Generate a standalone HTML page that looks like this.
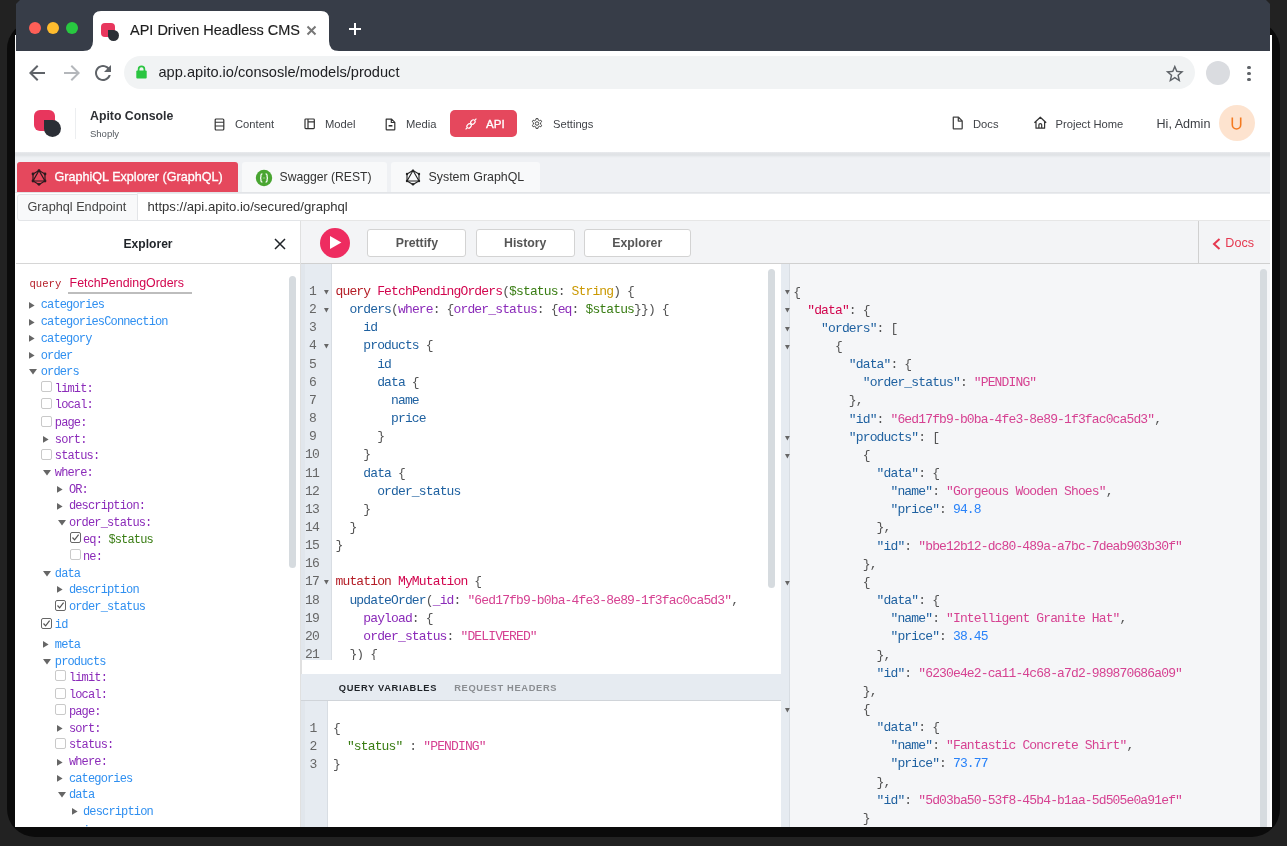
<!DOCTYPE html><html><head><meta charset="utf-8"><style>
html,body{margin:0;padding:0;}
body{width:1287px;height:846px;overflow:hidden;background:#222222;position:relative;font-family:"Liberation Sans",sans-serif;}
</style></head><body>
<div style="position:absolute;left:6.5px;top:21px;width:1273px;height:816px;background:#0b0b0b;border-radius:28px;"></div>
<div style="position:absolute;left:0;top:0;width:1287px;height:827px;overflow:hidden;will-change:transform;">
<div style="position:absolute;left:15px;top:35px;width:1257px;height:792px;background:#ffffff;"></div>
<div style="position:absolute;left:16px;top:0px;width:1254px;height:51px;background:#373d48;clip-path:polygon(4px 0,1250px 0,1254px 4px,1254px 51px,0 51px,0 4px);"></div>
<svg style="position:absolute;left:83px;top:10px" width="256" height="41" viewBox="0 0 256 41"><path d="M0 41 Q10 41 10 31 L10 9 Q10 1 18 1 L238 1 Q246 1 246 9 L246 31 Q246 41 256 41 Z" fill="#ffffff"/></svg>
<div style="position:absolute;left:28.5px;top:22px;width:12px;height:12px;background:#fe5f57;border-radius:50%;"></div>
<div style="position:absolute;left:47px;top:22px;width:12px;height:12px;background:#febc2e;border-radius:50%;"></div>
<div style="position:absolute;left:65.5px;top:22px;width:12px;height:12px;background:#28c840;border-radius:50%;"></div>
<div style="position:absolute;left:101px;top:23px;width:14px;height:14px;background:#e8365d;border-radius:4px;"></div>
<div style="position:absolute;left:108px;top:30px;width:11px;height:11px;background:#2b2f36;border-radius:0 50% 50% 50%;"></div>
<div style="position:absolute;left:130.00px;top:22.72px;font-family:'Liberation Sans', sans-serif;font-size:14.5px;line-height:14.5px;color:#1e1e1e;font-weight:400;white-space:pre;-webkit-text-stroke:0.15px #1e1e1e;">API Driven Headless CMS</div>
<svg style="position:absolute;left:306px;top:25px" width="11" height="11" viewBox="0 0 11 11"><path d="M1.5 1.5 L9.5 9.5 M9.5 1.5 L1.5 9.5" stroke="#777" stroke-width="2"/></svg>
<svg style="position:absolute;left:348px;top:22px" width="14" height="14" viewBox="0 0 14 14"><path d="M7 1 V13 M1 7 H13" stroke="#ffffff" stroke-width="2"/></svg>
<svg style="position:absolute;left:25.3px;top:60.7px" width="24" height="24" viewBox="0 0 24 24"><path d="M20 11H7.83l5.59-5.59L12 4l-8 8 8 8 1.41-1.41L7.83 13H20v-2z" fill="#5f6368"/></svg>
<svg style="position:absolute;left:59.5px;top:60.7px" width="24" height="24" viewBox="0 0 24 24"><path d="M12 4l-1.41 1.41L16.17 11H4v2h12.17l-5.58 5.59L12 20l8-8z" fill="#b4b7bb"/></svg>
<svg style="position:absolute;left:91px;top:60.5px" width="24" height="24" viewBox="0 0 24 24"><path d="M17.65 6.35C16.2 4.9 14.21 4 12 4c-4.42 0-7.99 3.58-7.99 8s3.57 8 7.99 8c3.73 0 6.84-2.55 7.73-6h-2.08c-.82 2.33-3.04 4-5.65 4-3.31 0-6-2.69-6-6s2.69-6 6-6c1.66 0 3.14.69 4.22 1.78L13 11h7V4l-2.35 2.35z" fill="#5f6368"/></svg>
<div style="position:absolute;left:124px;top:56px;width:1070.5px;height:33px;background:#f1f3f4;border-radius:17px;"></div>
<svg style="position:absolute;left:136px;top:65.3px" width="11" height="14" viewBox="0 0 11 14"><path d="M2.6 6 V4.2 A2.9 2.9 0 0 1 8.4 4.2 V6" stroke="#2ac540" stroke-width="1.7" fill="none"/><rect x="0.3" y="5.6" width="10.4" height="8" rx="1" fill="#2ac540"/></svg>
<div style="position:absolute;left:158.50px;top:64.64px;font-family:'Liberation Sans', sans-serif;font-size:14.6px;line-height:14.6px;color:#202124;font-weight:400;white-space:pre;">app.apito.io/consosle/models/product</div>
<svg style="position:absolute;left:1164.2px;top:62.7px" width="21.6" height="21.6" viewBox="0 0 24 24"><path d="M22 9.24l-7.19-.62L12 2 9.19 8.63 2 9.24l5.46 4.73L5.82 21 12 17.27 18.18 21l-1.63-7.03L22 9.24zM12 15.4l-3.76 2.27 1-4.28-3.32-2.88 4.38-.38L12 6.1l1.71 4.04 4.38.38-3.32 2.88 1 4.28L12 15.4z" fill="#5f6368"/></svg>
<div style="position:absolute;left:1206.2px;top:61.1px;width:24px;height:24px;background:#dadce0;border-radius:50%;"></div>
<div style="position:absolute;left:1247.3px;top:65.7px;width:3.6px;height:3.6px;background:#5f6368;border-radius:50%;"></div>
<div style="position:absolute;left:1247.3px;top:71.7px;width:3.6px;height:3.6px;background:#5f6368;border-radius:50%;"></div>
<div style="position:absolute;left:1247.3px;top:77.8px;width:3.6px;height:3.6px;background:#5f6368;border-radius:50%;"></div>
<div style="position:absolute;left:34px;top:110px;width:21px;height:21px;background:#e8365d;border-radius:6px;"></div>
<div style="position:absolute;left:44px;top:120px;width:17px;height:17px;background:#2b2f36;border-radius:0 50% 50% 50%;"></div>
<div style="position:absolute;left:75px;top:108px;width:1px;height:31px;background:#eceef0;"></div>
<div style="position:absolute;left:90.00px;top:109.59px;font-family:'Liberation Sans', sans-serif;font-size:12.3px;line-height:12.3px;color:#2d2f33;font-weight:700;white-space:pre;">Apito Console</div>
<div style="position:absolute;left:90.00px;top:128.96px;font-family:'Liberation Sans', sans-serif;font-size:9.5px;line-height:9.5px;color:#555a60;font-weight:400;white-space:pre;">Shoply</div>
<svg style="position:absolute;left:214px;top:117.5px" width="11" height="13" viewBox="0 0 11 13"><rect x="1.2" y="1" width="8.6" height="11" rx="1" stroke="#333" stroke-width="1.2" fill="none"/><path d="M1.2 4.3 H9.8 M1.2 8 H9.8" stroke="#333" stroke-width="1.1"/></svg>
<div style="position:absolute;left:235.00px;top:118.52px;font-family:'Liberation Sans', sans-serif;font-size:11.2px;line-height:11.2px;color:#404348;font-weight:400;white-space:pre;">Content</div>
<svg style="position:absolute;left:303.5px;top:118px" width="11" height="12" viewBox="0 0 11 12"><rect x="1" y="1" width="9.3" height="9.6" rx="0.8" stroke="#333" stroke-width="1.2" fill="none"/><path d="M4 1 V10.6 M4 3.8 H10.3" stroke="#333" stroke-width="1.2"/></svg>
<div style="position:absolute;left:325.00px;top:118.52px;font-family:'Liberation Sans', sans-serif;font-size:11.2px;line-height:11.2px;color:#404348;font-weight:400;white-space:pre;">Model</div>
<svg style="position:absolute;left:384.8px;top:117.5px" width="11" height="13" viewBox="0 0 11 13"><path d="M1.2 1.1 H6.6 L9.8 4.3 V11.2 Q9.8 11.9 9.1 11.9 H1.9 Q1.2 11.9 1.2 11.2 Z M6.3 1.1 V4.5 H9.8" stroke="#333" stroke-width="1.2" fill="none" stroke-linejoin="round"/><path d="M3.6 7.8 H7.4" stroke="#222" stroke-width="1.5"/></svg>
<div style="position:absolute;left:406.00px;top:118.52px;font-family:'Liberation Sans', sans-serif;font-size:11.2px;line-height:11.2px;color:#404348;font-weight:400;white-space:pre;">Media</div>
<div style="position:absolute;left:450px;top:110px;width:67px;height:27px;background:#e5485d;border-radius:5px;"></div>
<svg style="position:absolute;left:464.5px;top:118px" width="12" height="12" viewBox="0 0 12 12"><g stroke="#ffffff" stroke-width="1.1" fill="none"><ellipse cx="7.9" cy="4.1" rx="2.5" ry="1.9" transform="rotate(-45 7.9 4.1)"/><ellipse cx="4.1" cy="7.9" rx="2.5" ry="1.9" transform="rotate(-45 4.1 7.9)"/><path d="M9.9 2.1 L11.4 0.6 M2.1 9.9 L0.6 11.4 M5.5 6.5 L6.5 5.5"/></g></svg>
<div style="position:absolute;left:486.00px;top:118.18px;font-family:'Liberation Sans', sans-serif;font-size:11.6px;line-height:11.6px;color:#ffffff;font-weight:400;white-space:pre;-webkit-text-stroke:0.3px #fff;">API</div>
<svg style="position:absolute;left:531px;top:117px" width="12" height="13" viewBox="0 0 24 24"><path d="M12 8.5 A3.5 3.5 0 1 0 12 15.5 A3.5 3.5 0 1 0 12 8.5 Z" stroke="#444" stroke-width="2" fill="none"/><path d="M10.3 2 H13.7 L14.3 4.9 L16.9 6.4 L19.7 5.4 L21.4 8.4 L19.2 10.4 V13.6 L21.4 15.6 L19.7 18.6 L16.9 17.6 L14.3 19.1 L13.7 22 H10.3 L9.7 19.1 L7.1 17.6 L4.3 18.6 L2.6 15.6 L4.8 13.6 V10.4 L2.6 8.4 L4.3 5.4 L7.1 6.4 L9.7 4.9 Z" stroke="#444" stroke-width="2" fill="none" stroke-linejoin="round"/></svg>
<div style="position:absolute;left:553.00px;top:118.52px;font-family:'Liberation Sans', sans-serif;font-size:11.2px;line-height:11.2px;color:#404348;font-weight:400;white-space:pre;">Settings</div>
<svg style="position:absolute;left:952px;top:115.5px" width="12" height="14" viewBox="0 0 12 14"><path d="M1.3 1.2 H6.5 L10.2 4.9 V12.2 Q10.2 12.9 9.5 12.9 H2 Q1.3 12.9 1.3 12.2 Z M6.3 1.2 V5.1 H10.2" stroke="#444" stroke-width="1.3" fill="none" stroke-linejoin="round"/></svg>
<div style="position:absolute;left:973.00px;top:118.52px;font-family:'Liberation Sans', sans-serif;font-size:11.2px;line-height:11.2px;color:#404348;font-weight:400;white-space:pre;">Docs</div>
<svg style="position:absolute;left:1033px;top:116px" width="14" height="13" viewBox="0 0 14 13"><path d="M1.4 6.8 L7.3 1.2 L13.2 6.8 M3 5.4 V12.2 H11.6 V5.4 M5.9 12.2 V8.8 Q5.9 7.6 7.3 7.6 Q8.7 7.6 8.7 8.8 V12.2" stroke="#333" stroke-width="1.2" fill="none" stroke-linejoin="round"/></svg>
<div style="position:absolute;left:1055.50px;top:118.52px;font-family:'Liberation Sans', sans-serif;font-size:11.2px;line-height:11.2px;color:#404348;font-weight:400;white-space:pre;">Project Home</div>
<div style="position:absolute;left:1156.50px;top:117.83px;font-family:'Liberation Sans', sans-serif;font-size:12.6px;line-height:12.6px;color:#3b3e43;font-weight:400;white-space:pre;">Hi, Admin</div>
<div style="position:absolute;left:1218.5px;top:105px;width:36px;height:36px;background:#fde3cf;border-radius:50%;"></div>
<svg style="position:absolute;left:1231px;top:116.5px" width="11" height="13" viewBox="0 0 11 13"><path d="M1.3 0.5 V7.8 A4.2 4.2 0 0 0 9.7 7.8 V0.5" stroke="#f47a20" stroke-width="1.6" fill="none"/></svg>
<div style="position:absolute;left:15px;top:152px;width:1255px;height:41px;background:linear-gradient(#e9ebee 0px,#e0e2e5 2px,#e2e5e8 3.5px,#eceef1 5px,#eff1f4 6.5px,#eff1f4 100%);"></div>
<div style="position:absolute;left:15px;top:192px;width:1255px;height:1px;background:#e2e4e7;"></div>
<div style="position:absolute;left:17px;top:162px;width:221px;height:30px;background:#e5485d;border-radius:3px 3px 0 0;"></div>
<svg style="position:absolute;left:31px;top:169px" width="16" height="17" viewBox="0 0 16 17"><g stroke="#2a1a1e" stroke-width="1.2" fill="none"><path d="M8 1.5 L14 5 V12 L8 15.5 L2 12 V5 Z"/><path d="M8 1.5 L14 12 H2 Z"/></g><g fill="#2a1a1e"><circle cx="8" cy="1.7" r="1.4"/><circle cx="14" cy="5" r="1.4"/><circle cx="14" cy="12" r="1.4"/><circle cx="8" cy="15.3" r="1.4"/><circle cx="2" cy="12" r="1.4"/><circle cx="2" cy="5" r="1.4"/></g></svg>
<div style="position:absolute;left:54.50px;top:170.83px;font-family:'Liberation Sans', sans-serif;font-size:12.6px;line-height:12.6px;color:#ffffff;font-weight:400;white-space:pre;-webkit-text-stroke:0.3px #fff;">GraphiQL Explorer (GraphQL)</div>
<div style="position:absolute;left:242px;top:162px;width:145px;height:30px;background:#f8f9fa;border-radius:3px 3px 0 0;"></div>
<svg style="position:absolute;left:255.3px;top:168.5px" width="18" height="18" viewBox="0 0 18 18"><circle cx="9" cy="9" r="8.2" fill="#49a532"/><g stroke="#ffffff" stroke-width="1.2" fill="none"><path d="M7.4 4.8 Q5.9 4.8 5.9 6.4 V8 Q5.9 9 5 9 Q5.9 9 5.9 10 V11.6 Q5.9 13.2 7.4 13.2"/><path d="M10.6 4.8 Q12.1 4.8 12.1 6.4 V8 Q12.1 9 13 9 Q12.1 9 12.1 10 V11.6 Q12.1 13.2 10.6 13.2"/></g><path d="M7.8 9 H10.2" stroke="#cfe8c8" stroke-width="0.6"/></svg>
<div style="position:absolute;left:279.50px;top:171.17px;font-family:'Liberation Sans', sans-serif;font-size:12.2px;line-height:12.2px;color:#333333;font-weight:400;white-space:pre;">Swagger (REST)</div>
<div style="position:absolute;left:391px;top:162px;width:149px;height:30px;background:#f8f9fa;border-radius:3px 3px 0 0;"></div>
<svg style="position:absolute;left:405px;top:169px" width="16" height="17" viewBox="0 0 16 17"><g stroke="#222" stroke-width="1.1" fill="none"><path d="M8 1.5 L14 5 V12 L8 15.5 L2 12 V5 Z"/><path d="M8 1.5 L14 12 H2 Z"/></g><g fill="#222"><circle cx="8" cy="1.7" r="1.2"/><circle cx="14" cy="5" r="1.2"/><circle cx="14" cy="12" r="1.2"/><circle cx="8" cy="15.3" r="1.2"/><circle cx="2" cy="12" r="1.2"/><circle cx="2" cy="5" r="1.2"/></g></svg>
<div style="position:absolute;left:428.50px;top:171.00px;font-family:'Liberation Sans', sans-serif;font-size:12.4px;line-height:12.4px;color:#333333;font-weight:400;white-space:pre;">System GraphQL</div>
<div style="position:absolute;left:16px;top:193px;width:1254px;height:28px;background:#ffffff;"></div>
<div style="position:absolute;left:16.5px;top:193.5px;width:121px;height:27px;background:#f8f9fa;border:1px solid #e3e5e8;border-radius:3px 0 0 3px;box-sizing:border-box;"></div>
<div style="position:absolute;left:137px;top:193px;width:1133px;height:28px;border-top:1px solid #e9ebee;border-bottom:1px solid #e3e5e8;box-sizing:border-box;"></div>
<div style="position:absolute;left:27.50px;top:200.75px;font-family:'Liberation Sans', sans-serif;font-size:12.7px;line-height:12.7px;color:#444444;font-weight:400;white-space:pre;">Graphql Endpoint</div>
<div style="position:absolute;left:147.50px;top:200.41px;font-family:'Liberation Sans', sans-serif;font-size:13.1px;line-height:13.1px;color:#333333;font-weight:400;white-space:pre;">https://api.apito.io/secured/graphql</div>
<div style="position:absolute;left:16px;top:221px;width:285px;height:606px;background:#ffffff;"></div>
<div style="position:absolute;left:16px;top:263px;width:285px;height:1px;background:#d6d6d6;"></div>
<div style="position:absolute;left:300px;top:221px;width:1px;height:606px;background:#e0e0e0;"></div>
<div style="position:absolute;left:123.50px;top:237.75px;font-family:'Liberation Sans', sans-serif;font-size:12.1px;line-height:12.1px;color:#1f2328;font-weight:700;white-space:pre;">Explorer</div>
<svg style="position:absolute;left:274px;top:238px" width="12" height="12" viewBox="0 0 12 12"><path d="M1 1 L11 11 M11 1 L1 11" stroke="#1f2328" stroke-width="1.5"/></svg>
<div style="position:absolute;left:29.50px;top:278.88px;font-family:'Liberation Mono', monospace;font-size:10.6px;line-height:10.6px;color:#b5202a;font-weight:400;white-space:pre;">query</div>
<div style="position:absolute;left:69.60px;top:276.50px;font-family:'Liberation Sans', sans-serif;font-size:12.4px;line-height:12.4px;color:#d2054e;font-weight:400;white-space:pre;">FetchPendingOrders</div>
<div style="position:absolute;left:68px;top:292.2px;width:124px;height:1.6px;background:#bdbdbd;"></div>
<svg style="position:absolute;left:28.20px;top:300.50px" width="7.60" height="8.80"><path d="M1 1 L6.60 4.40 L1 7.80 Z" fill="#666666"/></svg>
<div style="position:absolute;left:40.70px;top:298.91px;font-family:'Liberation Mono', monospace;font-size:12px;line-height:12px;color:#2f8ff0;font-weight:400;white-space:pre;letter-spacing:-0.85px;">categories</div>
<svg style="position:absolute;left:28.20px;top:317.70px" width="7.60" height="8.80"><path d="M1 1 L6.60 4.40 L1 7.80 Z" fill="#666666"/></svg>
<div style="position:absolute;left:40.70px;top:316.11px;font-family:'Liberation Mono', monospace;font-size:12px;line-height:12px;color:#2f8ff0;font-weight:400;white-space:pre;letter-spacing:-0.85px;">categoriesConnection</div>
<svg style="position:absolute;left:28.20px;top:334.20px" width="7.60" height="8.80"><path d="M1 1 L6.60 4.40 L1 7.80 Z" fill="#666666"/></svg>
<div style="position:absolute;left:40.70px;top:332.61px;font-family:'Liberation Mono', monospace;font-size:12px;line-height:12px;color:#2f8ff0;font-weight:400;white-space:pre;letter-spacing:-0.85px;">category</div>
<svg style="position:absolute;left:28.20px;top:351.10px" width="7.60" height="8.80"><path d="M1 1 L6.60 4.40 L1 7.80 Z" fill="#666666"/></svg>
<div style="position:absolute;left:40.70px;top:349.51px;font-family:'Liberation Mono', monospace;font-size:12px;line-height:12px;color:#2f8ff0;font-weight:400;white-space:pre;letter-spacing:-0.85px;">order</div>
<svg style="position:absolute;left:28.30px;top:367.80px" width="10.00" height="7.60"><path d="M1 1 L9.00 1 L5.00 6.60 Z" fill="#666666"/></svg>
<div style="position:absolute;left:40.70px;top:365.91px;font-family:'Liberation Mono', monospace;font-size:12px;line-height:12px;color:#2f8ff0;font-weight:400;white-space:pre;letter-spacing:-0.85px;">orders</div>
<div style="position:absolute;left:41px;top:381px;width:11px;height:11px;border:1px solid #c9c9c9;border-radius:2px;box-sizing:border-box;background:#fff;"></div>
<div style="position:absolute;left:54.80px;top:382.61px;font-family:'Liberation Mono', monospace;font-size:12px;line-height:12px;color:#8b2bb9;font-weight:400;white-space:pre;letter-spacing:-0.85px;">limit:</div>
<div style="position:absolute;left:41px;top:398px;width:11px;height:11px;border:1px solid #c9c9c9;border-radius:2px;box-sizing:border-box;background:#fff;"></div>
<div style="position:absolute;left:54.80px;top:399.11px;font-family:'Liberation Mono', monospace;font-size:12px;line-height:12px;color:#8b2bb9;font-weight:400;white-space:pre;letter-spacing:-0.85px;">local:</div>
<div style="position:absolute;left:41px;top:416px;width:11px;height:11px;border:1px solid #c9c9c9;border-radius:2px;box-sizing:border-box;background:#fff;"></div>
<div style="position:absolute;left:54.80px;top:416.81px;font-family:'Liberation Mono', monospace;font-size:12px;line-height:12px;color:#8b2bb9;font-weight:400;white-space:pre;letter-spacing:-0.85px;">page:</div>
<svg style="position:absolute;left:42.30px;top:435.20px" width="7.60" height="8.80"><path d="M1 1 L6.60 4.40 L1 7.80 Z" fill="#666666"/></svg>
<div style="position:absolute;left:54.80px;top:433.61px;font-family:'Liberation Mono', monospace;font-size:12px;line-height:12px;color:#8b2bb9;font-weight:400;white-space:pre;letter-spacing:-0.85px;">sort:</div>
<div style="position:absolute;left:41px;top:449px;width:11px;height:11px;border:1px solid #c9c9c9;border-radius:2px;box-sizing:border-box;background:#fff;"></div>
<div style="position:absolute;left:54.80px;top:450.41px;font-family:'Liberation Mono', monospace;font-size:12px;line-height:12px;color:#8b2bb9;font-weight:400;white-space:pre;letter-spacing:-0.85px;">status:</div>
<svg style="position:absolute;left:42.40px;top:468.70px" width="10.00" height="7.60"><path d="M1 1 L9.00 1 L5.00 6.60 Z" fill="#666666"/></svg>
<div style="position:absolute;left:54.80px;top:466.81px;font-family:'Liberation Mono', monospace;font-size:12px;line-height:12px;color:#8b2bb9;font-weight:400;white-space:pre;letter-spacing:-0.85px;">where:</div>
<svg style="position:absolute;left:56.40px;top:485.20px" width="7.60" height="8.80"><path d="M1 1 L6.60 4.40 L1 7.80 Z" fill="#666666"/></svg>
<div style="position:absolute;left:68.90px;top:483.61px;font-family:'Liberation Mono', monospace;font-size:12px;line-height:12px;color:#8b2bb9;font-weight:400;white-space:pre;letter-spacing:-0.85px;">OR:</div>
<svg style="position:absolute;left:56.40px;top:501.70px" width="7.60" height="8.80"><path d="M1 1 L6.60 4.40 L1 7.80 Z" fill="#666666"/></svg>
<div style="position:absolute;left:68.90px;top:500.11px;font-family:'Liberation Mono', monospace;font-size:12px;line-height:12px;color:#8b2bb9;font-weight:400;white-space:pre;letter-spacing:-0.85px;">description:</div>
<svg style="position:absolute;left:56.50px;top:518.80px" width="10.00" height="7.60"><path d="M1 1 L9.00 1 L5.00 6.60 Z" fill="#666666"/></svg>
<div style="position:absolute;left:68.90px;top:516.91px;font-family:'Liberation Mono', monospace;font-size:12px;line-height:12px;color:#8b2bb9;font-weight:400;white-space:pre;letter-spacing:-0.85px;">order_status:</div>
<div style="position:absolute;left:70px;top:532px;width:11px;height:11px;border:1.5px solid #666;border-radius:2px;box-sizing:border-box;background:#fff;"></div>
<svg style="position:absolute;left:70px;top:532px" width="11" height="11" viewBox="0 0 11 11"><path d="M2.5 5.5 L4.6 7.8 L8.6 2.6" stroke="#555" stroke-width="1.2" fill="none"/></svg>
<div style="position:absolute;left:83.00px;top:533.81px;font-family:'Liberation Mono', monospace;font-size:12px;line-height:12px;color:#8b2bb9;font-weight:400;white-space:pre;letter-spacing:-0.85px;"><span style="color:#8b2bb9">eq: </span><span style="color:#397d13">$status</span></div>
<div style="position:absolute;left:70px;top:549px;width:11px;height:11px;border:1px solid #c9c9c9;border-radius:2px;box-sizing:border-box;background:#fff;"></div>
<div style="position:absolute;left:83.00px;top:550.61px;font-family:'Liberation Mono', monospace;font-size:12px;line-height:12px;color:#8b2bb9;font-weight:400;white-space:pre;letter-spacing:-0.85px;">ne:</div>
<svg style="position:absolute;left:42.40px;top:569.70px" width="10.00" height="7.60"><path d="M1 1 L9.00 1 L5.00 6.60 Z" fill="#666666"/></svg>
<div style="position:absolute;left:54.80px;top:567.81px;font-family:'Liberation Mono', monospace;font-size:12px;line-height:12px;color:#2f8ff0;font-weight:400;white-space:pre;letter-spacing:-0.85px;">data</div>
<svg style="position:absolute;left:56.40px;top:585.30px" width="7.60" height="8.80"><path d="M1 1 L6.60 4.40 L1 7.80 Z" fill="#666666"/></svg>
<div style="position:absolute;left:68.90px;top:583.71px;font-family:'Liberation Mono', monospace;font-size:12px;line-height:12px;color:#2f8ff0;font-weight:400;white-space:pre;letter-spacing:-0.85px;">description</div>
<div style="position:absolute;left:55px;top:600px;width:11px;height:11px;border:1.5px solid #666;border-radius:2px;box-sizing:border-box;background:#fff;"></div>
<svg style="position:absolute;left:55px;top:600px" width="11" height="11" viewBox="0 0 11 11"><path d="M2.5 5.5 L4.6 7.8 L8.6 2.6" stroke="#555" stroke-width="1.2" fill="none"/></svg>
<div style="position:absolute;left:68.90px;top:600.81px;font-family:'Liberation Mono', monospace;font-size:12px;line-height:12px;color:#2f8ff0;font-weight:400;white-space:pre;letter-spacing:-0.85px;">order_status</div>
<div style="position:absolute;left:41px;top:618px;width:11px;height:11px;border:1.5px solid #666;border-radius:2px;box-sizing:border-box;background:#fff;"></div>
<svg style="position:absolute;left:41px;top:618px" width="11" height="11" viewBox="0 0 11 11"><path d="M2.5 5.5 L4.6 7.8 L8.6 2.6" stroke="#555" stroke-width="1.2" fill="none"/></svg>
<div style="position:absolute;left:54.80px;top:619.31px;font-family:'Liberation Mono', monospace;font-size:12px;line-height:12px;color:#2f8ff0;font-weight:400;white-space:pre;letter-spacing:-0.85px;">id</div>
<svg style="position:absolute;left:42.30px;top:640.40px" width="7.60" height="8.80"><path d="M1 1 L6.60 4.40 L1 7.80 Z" fill="#666666"/></svg>
<div style="position:absolute;left:54.80px;top:638.81px;font-family:'Liberation Mono', monospace;font-size:12px;line-height:12px;color:#2f8ff0;font-weight:400;white-space:pre;letter-spacing:-0.85px;">meta</div>
<svg style="position:absolute;left:42.40px;top:657.60px" width="10.00" height="7.60"><path d="M1 1 L9.00 1 L5.00 6.60 Z" fill="#666666"/></svg>
<div style="position:absolute;left:54.80px;top:655.71px;font-family:'Liberation Mono', monospace;font-size:12px;line-height:12px;color:#2f8ff0;font-weight:400;white-space:pre;letter-spacing:-0.85px;">products</div>
<div style="position:absolute;left:55px;top:670px;width:11px;height:11px;border:1px solid #c9c9c9;border-radius:2px;box-sizing:border-box;background:#fff;"></div>
<div style="position:absolute;left:68.90px;top:671.71px;font-family:'Liberation Mono', monospace;font-size:12px;line-height:12px;color:#8b2bb9;font-weight:400;white-space:pre;letter-spacing:-0.85px;">limit:</div>
<div style="position:absolute;left:55px;top:688px;width:11px;height:11px;border:1px solid #c9c9c9;border-radius:2px;box-sizing:border-box;background:#fff;"></div>
<div style="position:absolute;left:68.90px;top:688.81px;font-family:'Liberation Mono', monospace;font-size:12px;line-height:12px;color:#8b2bb9;font-weight:400;white-space:pre;letter-spacing:-0.85px;">local:</div>
<div style="position:absolute;left:55px;top:704px;width:11px;height:11px;border:1px solid #c9c9c9;border-radius:2px;box-sizing:border-box;background:#fff;"></div>
<div style="position:absolute;left:68.90px;top:705.61px;font-family:'Liberation Mono', monospace;font-size:12px;line-height:12px;color:#8b2bb9;font-weight:400;white-space:pre;letter-spacing:-0.85px;">page:</div>
<svg style="position:absolute;left:56.40px;top:724.10px" width="7.60" height="8.80"><path d="M1 1 L6.60 4.40 L1 7.80 Z" fill="#666666"/></svg>
<div style="position:absolute;left:68.90px;top:722.51px;font-family:'Liberation Mono', monospace;font-size:12px;line-height:12px;color:#8b2bb9;font-weight:400;white-space:pre;letter-spacing:-0.85px;">sort:</div>
<div style="position:absolute;left:55px;top:738px;width:11px;height:11px;border:1px solid #c9c9c9;border-radius:2px;box-sizing:border-box;background:#fff;"></div>
<div style="position:absolute;left:68.90px;top:739.31px;font-family:'Liberation Mono', monospace;font-size:12px;line-height:12px;color:#8b2bb9;font-weight:400;white-space:pre;letter-spacing:-0.85px;">status:</div>
<svg style="position:absolute;left:56.40px;top:757.80px" width="7.60" height="8.80"><path d="M1 1 L6.60 4.40 L1 7.80 Z" fill="#666666"/></svg>
<div style="position:absolute;left:68.90px;top:756.21px;font-family:'Liberation Mono', monospace;font-size:12px;line-height:12px;color:#8b2bb9;font-weight:400;white-space:pre;letter-spacing:-0.85px;">where:</div>
<svg style="position:absolute;left:56.40px;top:774.20px" width="7.60" height="8.80"><path d="M1 1 L6.60 4.40 L1 7.80 Z" fill="#666666"/></svg>
<div style="position:absolute;left:68.90px;top:772.61px;font-family:'Liberation Mono', monospace;font-size:12px;line-height:12px;color:#2f8ff0;font-weight:400;white-space:pre;letter-spacing:-0.85px;">categories</div>
<svg style="position:absolute;left:56.50px;top:790.90px" width="10.00" height="7.60"><path d="M1 1 L9.00 1 L5.00 6.60 Z" fill="#666666"/></svg>
<div style="position:absolute;left:68.90px;top:789.01px;font-family:'Liberation Mono', monospace;font-size:12px;line-height:12px;color:#2f8ff0;font-weight:400;white-space:pre;letter-spacing:-0.85px;">data</div>
<svg style="position:absolute;left:70.50px;top:807.40px" width="7.60" height="8.80"><path d="M1 1 L6.60 4.40 L1 7.80 Z" fill="#666666"/></svg>
<div style="position:absolute;left:83.00px;top:805.81px;font-family:'Liberation Mono', monospace;font-size:12px;line-height:12px;color:#2f8ff0;font-weight:400;white-space:pre;letter-spacing:-0.85px;">description</div>
<svg style="position:absolute;left:70.50px;top:826.40px" width="7.60" height="8.80"><path d="M1 1 L6.60 4.40 L1 7.80 Z" fill="#666666"/></svg>
<div style="position:absolute;left:83.00px;top:824.81px;font-family:'Liberation Mono', monospace;font-size:12px;line-height:12px;color:#2f8ff0;font-weight:400;white-space:pre;letter-spacing:-0.85px;">images</div>
<div style="position:absolute;left:289px;top:276px;width:7px;height:292px;background:#d6dbdf;border-radius:4px;"></div>
<div style="position:absolute;left:301px;top:221px;width:969px;height:42px;background:linear-gradient(#f7f7f7,#e2e2e2);"></div>
<div style="position:absolute;left:301px;top:221px;width:969px;height:42px;background:#f3f4f6;"></div>
<div style="position:absolute;left:301px;top:220px;width:969px;height:1px;background:#e6e6e6;"></div>
<div style="position:absolute;left:301px;top:263px;width:969px;height:1px;background:#d0d0d0;"></div>
<div style="position:absolute;left:1198px;top:221px;width:1px;height:42px;background:#d0d0d0;"></div>
<div style="position:absolute;left:319.5px;top:227.5px;width:30.2px;height:30.2px;background:#ee2c60;border-radius:50%;"></div>
<svg style="position:absolute;left:328px;top:234px" width="16" height="18" viewBox="0 0 16 18"><path d="M2 2.1 L13.4 8.5 L2 14.9 Z" fill="#ffffff"/></svg>
<div style="position:absolute;left:367px;top:228.5px;width:99px;height:28px;background:#ffffff;border:1px solid #d3d3d3;border-radius:3px;box-sizing:border-box;"></div>
<div style="position:absolute;left:395.70px;top:236.79px;font-family:'Liberation Sans', sans-serif;font-size:12.3px;line-height:12.3px;color:#555555;font-weight:700;white-space:pre;">Prettify</div>
<div style="position:absolute;left:475.5px;top:228.5px;width:99px;height:28px;background:#ffffff;border:1px solid #d3d3d3;border-radius:3px;box-sizing:border-box;"></div>
<div style="position:absolute;left:504.00px;top:236.79px;font-family:'Liberation Sans', sans-serif;font-size:12.3px;line-height:12.3px;color:#555555;font-weight:700;white-space:pre;">History</div>
<div style="position:absolute;left:584px;top:228.5px;width:107px;height:28px;background:#ffffff;border:1px solid #d3d3d3;border-radius:3px;box-sizing:border-box;"></div>
<div style="position:absolute;left:612.30px;top:236.79px;font-family:'Liberation Sans', sans-serif;font-size:12.3px;line-height:12.3px;color:#555555;font-weight:700;white-space:pre;">Explorer</div>
<svg style="position:absolute;left:1212px;top:238px" width="9" height="12" viewBox="0 0 9 12"><path d="M7.5 1 L2 6 L7.5 11" stroke="#e5384f" stroke-width="2" fill="none"/></svg>
<div style="position:absolute;left:1225.30px;top:237.33px;font-family:'Liberation Sans', sans-serif;font-size:12.6px;line-height:12.6px;color:#e5384f;font-weight:400;white-space:pre;">Docs</div>
<div style="position:absolute;left:301px;top:264px;width:480px;height:396px;background:#ffffff;"></div>
<div style="position:absolute;left:301px;top:264px;width:31px;height:396px;background:#e6ebf1;"></div>
<div style="position:absolute;left:331px;top:264px;width:1px;height:396px;background:#d8dde3;"></div>
<div style="position:absolute;left:301px;top:264px;width:4px;height:396px;background:#e1e6ec;"></div>
<div style="position:absolute;left:309.00px;top:285.04px;font-family:'Liberation Mono', monospace;font-size:13px;line-height:13px;color:#666666;font-weight:400;white-space:pre;letter-spacing:-0.86px;">1</div>
<svg style="position:absolute;left:323.00px;top:288.80px" width="6.80" height="6.40"><path d="M1 1 L5.80 1 L3.40 5.40 Z" fill="#666666"/></svg>
<div style="position:absolute;left:335.50px;top:285.04px;font-family:'Liberation Mono', monospace;font-size:13px;line-height:13px;color:#555555;font-weight:400;white-space:pre;letter-spacing:-0.86px;"><span style="color:#b41d26">query</span><span style="color:#555555"> </span><span style="color:#d2054e">FetchPendingOrders</span><span style="color:#555555">(</span><span style="color:#397d13">$status</span><span style="color:#555555">: </span><span style="color:#ca9800">String</span><span style="color:#555555">) {</span></div>
<div style="position:absolute;left:309.00px;top:303.19px;font-family:'Liberation Mono', monospace;font-size:13px;line-height:13px;color:#666666;font-weight:400;white-space:pre;letter-spacing:-0.86px;">2</div>
<svg style="position:absolute;left:323.00px;top:306.95px" width="6.80" height="6.40"><path d="M1 1 L5.80 1 L3.40 5.40 Z" fill="#666666"/></svg>
<div style="position:absolute;left:335.50px;top:303.19px;font-family:'Liberation Mono', monospace;font-size:13px;line-height:13px;color:#555555;font-weight:400;white-space:pre;letter-spacing:-0.86px;"><span style="color:#555555">  </span><span style="color:#1f61a0">orders</span><span style="color:#555555">(</span><span style="color:#8b2bb9">where</span><span style="color:#555555">: {</span><span style="color:#8b2bb9">order_status</span><span style="color:#555555">: {</span><span style="color:#8b2bb9">eq</span><span style="color:#555555">: </span><span style="color:#397d13">$status</span><span style="color:#555555">}}) {</span></div>
<div style="position:absolute;left:309.00px;top:321.34px;font-family:'Liberation Mono', monospace;font-size:13px;line-height:13px;color:#666666;font-weight:400;white-space:pre;letter-spacing:-0.86px;">3</div>
<div style="position:absolute;left:335.50px;top:321.34px;font-family:'Liberation Mono', monospace;font-size:13px;line-height:13px;color:#555555;font-weight:400;white-space:pre;letter-spacing:-0.86px;"><span style="color:#555555">    </span><span style="color:#1f61a0">id</span></div>
<div style="position:absolute;left:309.00px;top:339.49px;font-family:'Liberation Mono', monospace;font-size:13px;line-height:13px;color:#666666;font-weight:400;white-space:pre;letter-spacing:-0.86px;">4</div>
<svg style="position:absolute;left:323.00px;top:343.25px" width="6.80" height="6.40"><path d="M1 1 L5.80 1 L3.40 5.40 Z" fill="#666666"/></svg>
<div style="position:absolute;left:335.50px;top:339.49px;font-family:'Liberation Mono', monospace;font-size:13px;line-height:13px;color:#555555;font-weight:400;white-space:pre;letter-spacing:-0.86px;"><span style="color:#555555">    </span><span style="color:#1f61a0">products</span><span style="color:#555555"> {</span></div>
<div style="position:absolute;left:309.00px;top:357.64px;font-family:'Liberation Mono', monospace;font-size:13px;line-height:13px;color:#666666;font-weight:400;white-space:pre;letter-spacing:-0.86px;">5</div>
<div style="position:absolute;left:335.50px;top:357.64px;font-family:'Liberation Mono', monospace;font-size:13px;line-height:13px;color:#555555;font-weight:400;white-space:pre;letter-spacing:-0.86px;"><span style="color:#555555">      </span><span style="color:#1f61a0">id</span></div>
<div style="position:absolute;left:309.00px;top:375.79px;font-family:'Liberation Mono', monospace;font-size:13px;line-height:13px;color:#666666;font-weight:400;white-space:pre;letter-spacing:-0.86px;">6</div>
<div style="position:absolute;left:335.50px;top:375.79px;font-family:'Liberation Mono', monospace;font-size:13px;line-height:13px;color:#555555;font-weight:400;white-space:pre;letter-spacing:-0.86px;"><span style="color:#555555">      </span><span style="color:#1f61a0">data</span><span style="color:#555555"> {</span></div>
<div style="position:absolute;left:309.00px;top:393.94px;font-family:'Liberation Mono', monospace;font-size:13px;line-height:13px;color:#666666;font-weight:400;white-space:pre;letter-spacing:-0.86px;">7</div>
<div style="position:absolute;left:335.50px;top:393.94px;font-family:'Liberation Mono', monospace;font-size:13px;line-height:13px;color:#555555;font-weight:400;white-space:pre;letter-spacing:-0.86px;"><span style="color:#555555">        </span><span style="color:#1f61a0">name</span></div>
<div style="position:absolute;left:309.00px;top:412.09px;font-family:'Liberation Mono', monospace;font-size:13px;line-height:13px;color:#666666;font-weight:400;white-space:pre;letter-spacing:-0.86px;">8</div>
<div style="position:absolute;left:335.50px;top:412.09px;font-family:'Liberation Mono', monospace;font-size:13px;line-height:13px;color:#555555;font-weight:400;white-space:pre;letter-spacing:-0.86px;"><span style="color:#555555">        </span><span style="color:#1f61a0">price</span></div>
<div style="position:absolute;left:309.00px;top:430.24px;font-family:'Liberation Mono', monospace;font-size:13px;line-height:13px;color:#666666;font-weight:400;white-space:pre;letter-spacing:-0.86px;">9</div>
<div style="position:absolute;left:335.50px;top:430.24px;font-family:'Liberation Mono', monospace;font-size:13px;line-height:13px;color:#555555;font-weight:400;white-space:pre;letter-spacing:-0.86px;"><span style="color:#555555">      }</span></div>
<div style="position:absolute;left:305.00px;top:448.39px;font-family:'Liberation Mono', monospace;font-size:13px;line-height:13px;color:#666666;font-weight:400;white-space:pre;letter-spacing:-0.86px;">10</div>
<div style="position:absolute;left:335.50px;top:448.39px;font-family:'Liberation Mono', monospace;font-size:13px;line-height:13px;color:#555555;font-weight:400;white-space:pre;letter-spacing:-0.86px;"><span style="color:#555555">    }</span></div>
<div style="position:absolute;left:305.00px;top:466.54px;font-family:'Liberation Mono', monospace;font-size:13px;line-height:13px;color:#666666;font-weight:400;white-space:pre;letter-spacing:-0.86px;">11</div>
<div style="position:absolute;left:335.50px;top:466.54px;font-family:'Liberation Mono', monospace;font-size:13px;line-height:13px;color:#555555;font-weight:400;white-space:pre;letter-spacing:-0.86px;"><span style="color:#555555">    </span><span style="color:#1f61a0">data</span><span style="color:#555555"> {</span></div>
<div style="position:absolute;left:305.00px;top:484.69px;font-family:'Liberation Mono', monospace;font-size:13px;line-height:13px;color:#666666;font-weight:400;white-space:pre;letter-spacing:-0.86px;">12</div>
<div style="position:absolute;left:335.50px;top:484.69px;font-family:'Liberation Mono', monospace;font-size:13px;line-height:13px;color:#555555;font-weight:400;white-space:pre;letter-spacing:-0.86px;"><span style="color:#555555">      </span><span style="color:#1f61a0">order_status</span></div>
<div style="position:absolute;left:305.00px;top:502.84px;font-family:'Liberation Mono', monospace;font-size:13px;line-height:13px;color:#666666;font-weight:400;white-space:pre;letter-spacing:-0.86px;">13</div>
<div style="position:absolute;left:335.50px;top:502.84px;font-family:'Liberation Mono', monospace;font-size:13px;line-height:13px;color:#555555;font-weight:400;white-space:pre;letter-spacing:-0.86px;"><span style="color:#555555">    }</span></div>
<div style="position:absolute;left:305.00px;top:520.99px;font-family:'Liberation Mono', monospace;font-size:13px;line-height:13px;color:#666666;font-weight:400;white-space:pre;letter-spacing:-0.86px;">14</div>
<div style="position:absolute;left:335.50px;top:520.99px;font-family:'Liberation Mono', monospace;font-size:13px;line-height:13px;color:#555555;font-weight:400;white-space:pre;letter-spacing:-0.86px;"><span style="color:#555555">  }</span></div>
<div style="position:absolute;left:305.00px;top:539.14px;font-family:'Liberation Mono', monospace;font-size:13px;line-height:13px;color:#666666;font-weight:400;white-space:pre;letter-spacing:-0.86px;">15</div>
<div style="position:absolute;left:335.50px;top:539.14px;font-family:'Liberation Mono', monospace;font-size:13px;line-height:13px;color:#555555;font-weight:400;white-space:pre;letter-spacing:-0.86px;"><span style="color:#555555">}</span></div>
<div style="position:absolute;left:305.00px;top:557.29px;font-family:'Liberation Mono', monospace;font-size:13px;line-height:13px;color:#666666;font-weight:400;white-space:pre;letter-spacing:-0.86px;">16</div>
<div style="position:absolute;left:305.00px;top:575.44px;font-family:'Liberation Mono', monospace;font-size:13px;line-height:13px;color:#666666;font-weight:400;white-space:pre;letter-spacing:-0.86px;">17</div>
<svg style="position:absolute;left:323.00px;top:579.20px" width="6.80" height="6.40"><path d="M1 1 L5.80 1 L3.40 5.40 Z" fill="#666666"/></svg>
<div style="position:absolute;left:335.50px;top:575.44px;font-family:'Liberation Mono', monospace;font-size:13px;line-height:13px;color:#555555;font-weight:400;white-space:pre;letter-spacing:-0.86px;"><span style="color:#b41d26">mutation</span><span style="color:#555555"> </span><span style="color:#d2054e">MyMutation</span><span style="color:#555555"> {</span></div>
<div style="position:absolute;left:305.00px;top:593.59px;font-family:'Liberation Mono', monospace;font-size:13px;line-height:13px;color:#666666;font-weight:400;white-space:pre;letter-spacing:-0.86px;">18</div>
<div style="position:absolute;left:335.50px;top:593.59px;font-family:'Liberation Mono', monospace;font-size:13px;line-height:13px;color:#555555;font-weight:400;white-space:pre;letter-spacing:-0.86px;"><span style="color:#555555">  </span><span style="color:#1f61a0">updateOrder</span><span style="color:#555555">(</span><span style="color:#8b2bb9">_id</span><span style="color:#555555">: </span><span style="color:#d64292">&quot;6ed17fb9-b0ba-4fe3-8e89-1f3fac0ca5d3&quot;</span><span style="color:#555555">,</span></div>
<div style="position:absolute;left:305.00px;top:611.74px;font-family:'Liberation Mono', monospace;font-size:13px;line-height:13px;color:#666666;font-weight:400;white-space:pre;letter-spacing:-0.86px;">19</div>
<div style="position:absolute;left:335.50px;top:611.74px;font-family:'Liberation Mono', monospace;font-size:13px;line-height:13px;color:#555555;font-weight:400;white-space:pre;letter-spacing:-0.86px;"><span style="color:#555555">    </span><span style="color:#8b2bb9">payload</span><span style="color:#555555">: {</span></div>
<div style="position:absolute;left:305.00px;top:629.89px;font-family:'Liberation Mono', monospace;font-size:13px;line-height:13px;color:#666666;font-weight:400;white-space:pre;letter-spacing:-0.86px;">20</div>
<div style="position:absolute;left:335.50px;top:629.89px;font-family:'Liberation Mono', monospace;font-size:13px;line-height:13px;color:#555555;font-weight:400;white-space:pre;letter-spacing:-0.86px;"><span style="color:#555555">    </span><span style="color:#8b2bb9">order_status</span><span style="color:#555555">: </span><span style="color:#d64292">&quot;DELIVERED&quot;</span></div>
<div style="position:absolute;left:305.00px;top:648.04px;font-family:'Liberation Mono', monospace;font-size:13px;line-height:13px;color:#666666;font-weight:400;white-space:pre;letter-spacing:-0.86px;">21</div>
<div style="position:absolute;left:335.50px;top:648.04px;font-family:'Liberation Mono', monospace;font-size:13px;line-height:13px;color:#555555;font-weight:400;white-space:pre;letter-spacing:-0.86px;"><span style="color:#555555">  }) {</span></div>
<div style="position:absolute;left:301px;top:660px;width:480px;height:14px;background:#ffffff;"></div>
<div style="position:absolute;left:301px;top:660px;width:1px;height:14px;background:#e0e0e0;"></div>
<div style="position:absolute;left:768px;top:269px;width:7px;height:319px;background:#d6dbdf;border-radius:4px;"></div>
<div style="position:absolute;left:301px;top:674px;width:480px;height:26px;background:#e6ebf1;"></div>
<div style="position:absolute;left:301px;top:700px;width:480px;height:1px;background:#d0d4d9;"></div>
<div style="position:absolute;left:338.80px;top:683.63px;font-family:'Liberation Sans', sans-serif;font-size:9.3px;line-height:9.3px;color:#1f2328;font-weight:700;white-space:pre;letter-spacing:0.67px;">QUERY VARIABLES</div>
<div style="position:absolute;left:454.20px;top:683.63px;font-family:'Liberation Sans', sans-serif;font-size:9.3px;line-height:9.3px;color:#8a8d91;font-weight:700;white-space:pre;letter-spacing:0.67px;">REQUEST HEADERS</div>
<div style="position:absolute;left:301px;top:701px;width:480px;height:126px;background:#ffffff;"></div>
<div style="position:absolute;left:301px;top:701px;width:27px;height:126px;background:#e6ebf1;"></div>
<div style="position:absolute;left:327px;top:701px;width:1px;height:126px;background:#d8dde3;"></div>
<div style="position:absolute;left:301px;top:701px;width:4px;height:126px;background:#e1e6ec;"></div>
<div style="position:absolute;left:309.50px;top:722.04px;font-family:'Liberation Mono', monospace;font-size:13px;line-height:13px;color:#666666;font-weight:400;white-space:pre;letter-spacing:-0.86px;">1</div>
<div style="position:absolute;left:333.00px;top:722.04px;font-family:'Liberation Mono', monospace;font-size:13px;line-height:13px;color:#555555;font-weight:400;white-space:pre;letter-spacing:-0.86px;"><span style="color:#555555">{</span></div>
<div style="position:absolute;left:309.50px;top:740.19px;font-family:'Liberation Mono', monospace;font-size:13px;line-height:13px;color:#666666;font-weight:400;white-space:pre;letter-spacing:-0.86px;">2</div>
<div style="position:absolute;left:333.00px;top:740.19px;font-family:'Liberation Mono', monospace;font-size:13px;line-height:13px;color:#555555;font-weight:400;white-space:pre;letter-spacing:-0.86px;"><span style="color:#555555">  </span><span style="color:#397d13">&quot;status&quot;</span><span style="color:#555555"> : </span><span style="color:#d64292">&quot;PENDING&quot;</span></div>
<div style="position:absolute;left:309.50px;top:758.34px;font-family:'Liberation Mono', monospace;font-size:13px;line-height:13px;color:#666666;font-weight:400;white-space:pre;letter-spacing:-0.86px;">3</div>
<div style="position:absolute;left:333.00px;top:758.34px;font-family:'Liberation Mono', monospace;font-size:13px;line-height:13px;color:#555555;font-weight:400;white-space:pre;letter-spacing:-0.86px;"><span style="color:#555555">}</span></div>
<div style="position:absolute;left:781px;top:264px;width:489px;height:563px;background:#f5f6f8;"></div>
<div style="position:absolute;left:781px;top:264px;width:9px;height:563px;background:#e6ebf1;"></div>
<div style="position:absolute;left:789px;top:264px;width:1px;height:563px;background:#d8dde3;"></div>
<svg style="position:absolute;left:784.00px;top:289.30px" width="6.80" height="6.40"><path d="M1 1 L5.80 1 L3.40 5.40 Z" fill="#666666"/></svg>
<div style="position:absolute;left:793.30px;top:285.54px;font-family:'Liberation Mono', monospace;font-size:13px;line-height:13px;color:#555555;font-weight:400;white-space:pre;letter-spacing:-0.86px;"><span style="color:#555555">{</span></div>
<svg style="position:absolute;left:784.00px;top:307.45px" width="6.80" height="6.40"><path d="M1 1 L5.80 1 L3.40 5.40 Z" fill="#666666"/></svg>
<div style="position:absolute;left:793.30px;top:303.69px;font-family:'Liberation Mono', monospace;font-size:13px;line-height:13px;color:#555555;font-weight:400;white-space:pre;letter-spacing:-0.86px;"><span style="color:#555555">  </span><span style="color:#d2054e">&quot;data&quot;</span><span style="color:#555555">: {</span></div>
<svg style="position:absolute;left:784.00px;top:325.60px" width="6.80" height="6.40"><path d="M1 1 L5.80 1 L3.40 5.40 Z" fill="#666666"/></svg>
<div style="position:absolute;left:793.30px;top:321.84px;font-family:'Liberation Mono', monospace;font-size:13px;line-height:13px;color:#555555;font-weight:400;white-space:pre;letter-spacing:-0.86px;"><span style="color:#555555">    </span><span style="color:#1f61a0">&quot;orders&quot;</span><span style="color:#555555">: [</span></div>
<svg style="position:absolute;left:784.00px;top:343.75px" width="6.80" height="6.40"><path d="M1 1 L5.80 1 L3.40 5.40 Z" fill="#666666"/></svg>
<div style="position:absolute;left:793.30px;top:339.99px;font-family:'Liberation Mono', monospace;font-size:13px;line-height:13px;color:#555555;font-weight:400;white-space:pre;letter-spacing:-0.86px;"><span style="color:#555555">      {</span></div>
<div style="position:absolute;left:793.30px;top:358.14px;font-family:'Liberation Mono', monospace;font-size:13px;line-height:13px;color:#555555;font-weight:400;white-space:pre;letter-spacing:-0.86px;"><span style="color:#555555">        </span><span style="color:#1f61a0">&quot;data&quot;</span><span style="color:#555555">: {</span></div>
<div style="position:absolute;left:793.30px;top:376.29px;font-family:'Liberation Mono', monospace;font-size:13px;line-height:13px;color:#555555;font-weight:400;white-space:pre;letter-spacing:-0.86px;"><span style="color:#555555">          </span><span style="color:#1f61a0">&quot;order_status&quot;</span><span style="color:#555555">: </span><span style="color:#d64292">&quot;PENDING&quot;</span></div>
<div style="position:absolute;left:793.30px;top:394.44px;font-family:'Liberation Mono', monospace;font-size:13px;line-height:13px;color:#555555;font-weight:400;white-space:pre;letter-spacing:-0.86px;"><span style="color:#555555">        },</span></div>
<div style="position:absolute;left:793.30px;top:412.59px;font-family:'Liberation Mono', monospace;font-size:13px;line-height:13px;color:#555555;font-weight:400;white-space:pre;letter-spacing:-0.86px;"><span style="color:#555555">        </span><span style="color:#1f61a0">&quot;id&quot;</span><span style="color:#555555">: </span><span style="color:#d64292">&quot;6ed17fb9-b0ba-4fe3-8e89-1f3fac0ca5d3&quot;</span><span style="color:#555555">,</span></div>
<svg style="position:absolute;left:784.00px;top:434.50px" width="6.80" height="6.40"><path d="M1 1 L5.80 1 L3.40 5.40 Z" fill="#666666"/></svg>
<div style="position:absolute;left:793.30px;top:430.74px;font-family:'Liberation Mono', monospace;font-size:13px;line-height:13px;color:#555555;font-weight:400;white-space:pre;letter-spacing:-0.86px;"><span style="color:#555555">        </span><span style="color:#1f61a0">&quot;products&quot;</span><span style="color:#555555">: [</span></div>
<svg style="position:absolute;left:784.00px;top:452.65px" width="6.80" height="6.40"><path d="M1 1 L5.80 1 L3.40 5.40 Z" fill="#666666"/></svg>
<div style="position:absolute;left:793.30px;top:448.89px;font-family:'Liberation Mono', monospace;font-size:13px;line-height:13px;color:#555555;font-weight:400;white-space:pre;letter-spacing:-0.86px;"><span style="color:#555555">          {</span></div>
<div style="position:absolute;left:793.30px;top:467.04px;font-family:'Liberation Mono', monospace;font-size:13px;line-height:13px;color:#555555;font-weight:400;white-space:pre;letter-spacing:-0.86px;"><span style="color:#555555">            </span><span style="color:#1f61a0">&quot;data&quot;</span><span style="color:#555555">: {</span></div>
<div style="position:absolute;left:793.30px;top:485.19px;font-family:'Liberation Mono', monospace;font-size:13px;line-height:13px;color:#555555;font-weight:400;white-space:pre;letter-spacing:-0.86px;"><span style="color:#555555">              </span><span style="color:#1f61a0">&quot;name&quot;</span><span style="color:#555555">: </span><span style="color:#d64292">&quot;Gorgeous Wooden Shoes&quot;</span><span style="color:#555555">,</span></div>
<div style="position:absolute;left:793.30px;top:503.34px;font-family:'Liberation Mono', monospace;font-size:13px;line-height:13px;color:#555555;font-weight:400;white-space:pre;letter-spacing:-0.86px;"><span style="color:#555555">              </span><span style="color:#1f61a0">&quot;price&quot;</span><span style="color:#555555">: </span><span style="color:#2882f9">94.8</span></div>
<div style="position:absolute;left:793.30px;top:521.49px;font-family:'Liberation Mono', monospace;font-size:13px;line-height:13px;color:#555555;font-weight:400;white-space:pre;letter-spacing:-0.86px;"><span style="color:#555555">            },</span></div>
<div style="position:absolute;left:793.30px;top:539.64px;font-family:'Liberation Mono', monospace;font-size:13px;line-height:13px;color:#555555;font-weight:400;white-space:pre;letter-spacing:-0.86px;"><span style="color:#555555">            </span><span style="color:#1f61a0">&quot;id&quot;</span><span style="color:#555555">: </span><span style="color:#d64292">&quot;bbe12b12-dc80-489a-a7bc-7deab903b30f&quot;</span></div>
<div style="position:absolute;left:793.30px;top:557.79px;font-family:'Liberation Mono', monospace;font-size:13px;line-height:13px;color:#555555;font-weight:400;white-space:pre;letter-spacing:-0.86px;"><span style="color:#555555">          },</span></div>
<svg style="position:absolute;left:784.00px;top:579.70px" width="6.80" height="6.40"><path d="M1 1 L5.80 1 L3.40 5.40 Z" fill="#666666"/></svg>
<div style="position:absolute;left:793.30px;top:575.94px;font-family:'Liberation Mono', monospace;font-size:13px;line-height:13px;color:#555555;font-weight:400;white-space:pre;letter-spacing:-0.86px;"><span style="color:#555555">          {</span></div>
<div style="position:absolute;left:793.30px;top:594.09px;font-family:'Liberation Mono', monospace;font-size:13px;line-height:13px;color:#555555;font-weight:400;white-space:pre;letter-spacing:-0.86px;"><span style="color:#555555">            </span><span style="color:#1f61a0">&quot;data&quot;</span><span style="color:#555555">: {</span></div>
<div style="position:absolute;left:793.30px;top:612.24px;font-family:'Liberation Mono', monospace;font-size:13px;line-height:13px;color:#555555;font-weight:400;white-space:pre;letter-spacing:-0.86px;"><span style="color:#555555">              </span><span style="color:#1f61a0">&quot;name&quot;</span><span style="color:#555555">: </span><span style="color:#d64292">&quot;Intelligent Granite Hat&quot;</span><span style="color:#555555">,</span></div>
<div style="position:absolute;left:793.30px;top:630.39px;font-family:'Liberation Mono', monospace;font-size:13px;line-height:13px;color:#555555;font-weight:400;white-space:pre;letter-spacing:-0.86px;"><span style="color:#555555">              </span><span style="color:#1f61a0">&quot;price&quot;</span><span style="color:#555555">: </span><span style="color:#2882f9">38.45</span></div>
<div style="position:absolute;left:793.30px;top:648.54px;font-family:'Liberation Mono', monospace;font-size:13px;line-height:13px;color:#555555;font-weight:400;white-space:pre;letter-spacing:-0.86px;"><span style="color:#555555">            },</span></div>
<div style="position:absolute;left:793.30px;top:666.69px;font-family:'Liberation Mono', monospace;font-size:13px;line-height:13px;color:#555555;font-weight:400;white-space:pre;letter-spacing:-0.86px;"><span style="color:#555555">            </span><span style="color:#1f61a0">&quot;id&quot;</span><span style="color:#555555">: </span><span style="color:#d64292">&quot;6230e4e2-ca11-4c68-a7d2-989870686a09&quot;</span></div>
<div style="position:absolute;left:793.30px;top:684.84px;font-family:'Liberation Mono', monospace;font-size:13px;line-height:13px;color:#555555;font-weight:400;white-space:pre;letter-spacing:-0.86px;"><span style="color:#555555">          },</span></div>
<svg style="position:absolute;left:784.00px;top:706.75px" width="6.80" height="6.40"><path d="M1 1 L5.80 1 L3.40 5.40 Z" fill="#666666"/></svg>
<div style="position:absolute;left:793.30px;top:702.99px;font-family:'Liberation Mono', monospace;font-size:13px;line-height:13px;color:#555555;font-weight:400;white-space:pre;letter-spacing:-0.86px;"><span style="color:#555555">          {</span></div>
<div style="position:absolute;left:793.30px;top:721.14px;font-family:'Liberation Mono', monospace;font-size:13px;line-height:13px;color:#555555;font-weight:400;white-space:pre;letter-spacing:-0.86px;"><span style="color:#555555">            </span><span style="color:#1f61a0">&quot;data&quot;</span><span style="color:#555555">: {</span></div>
<div style="position:absolute;left:793.30px;top:739.29px;font-family:'Liberation Mono', monospace;font-size:13px;line-height:13px;color:#555555;font-weight:400;white-space:pre;letter-spacing:-0.86px;"><span style="color:#555555">              </span><span style="color:#1f61a0">&quot;name&quot;</span><span style="color:#555555">: </span><span style="color:#d64292">&quot;Fantastic Concrete Shirt&quot;</span><span style="color:#555555">,</span></div>
<div style="position:absolute;left:793.30px;top:757.44px;font-family:'Liberation Mono', monospace;font-size:13px;line-height:13px;color:#555555;font-weight:400;white-space:pre;letter-spacing:-0.86px;"><span style="color:#555555">              </span><span style="color:#1f61a0">&quot;price&quot;</span><span style="color:#555555">: </span><span style="color:#2882f9">73.77</span></div>
<div style="position:absolute;left:793.30px;top:775.59px;font-family:'Liberation Mono', monospace;font-size:13px;line-height:13px;color:#555555;font-weight:400;white-space:pre;letter-spacing:-0.86px;"><span style="color:#555555">            },</span></div>
<div style="position:absolute;left:793.30px;top:793.74px;font-family:'Liberation Mono', monospace;font-size:13px;line-height:13px;color:#555555;font-weight:400;white-space:pre;letter-spacing:-0.86px;"><span style="color:#555555">            </span><span style="color:#1f61a0">&quot;id&quot;</span><span style="color:#555555">: </span><span style="color:#d64292">&quot;5d03ba50-53f8-45b4-b1aa-5d505e0a91ef&quot;</span></div>
<div style="position:absolute;left:793.30px;top:811.89px;font-family:'Liberation Mono', monospace;font-size:13px;line-height:13px;color:#555555;font-weight:400;white-space:pre;letter-spacing:-0.86px;"><span style="color:#555555">          }</span></div>
<div style="position:absolute;left:793.30px;top:830.04px;font-family:'Liberation Mono', monospace;font-size:13px;line-height:13px;color:#555555;font-weight:400;white-space:pre;letter-spacing:-0.86px;"><span style="color:#555555">        ]</span></div>
<div style="position:absolute;left:1260px;top:269px;width:7px;height:560px;background:#d6dbdf;border-radius:4px;"></div>
</div>
</body></html>
